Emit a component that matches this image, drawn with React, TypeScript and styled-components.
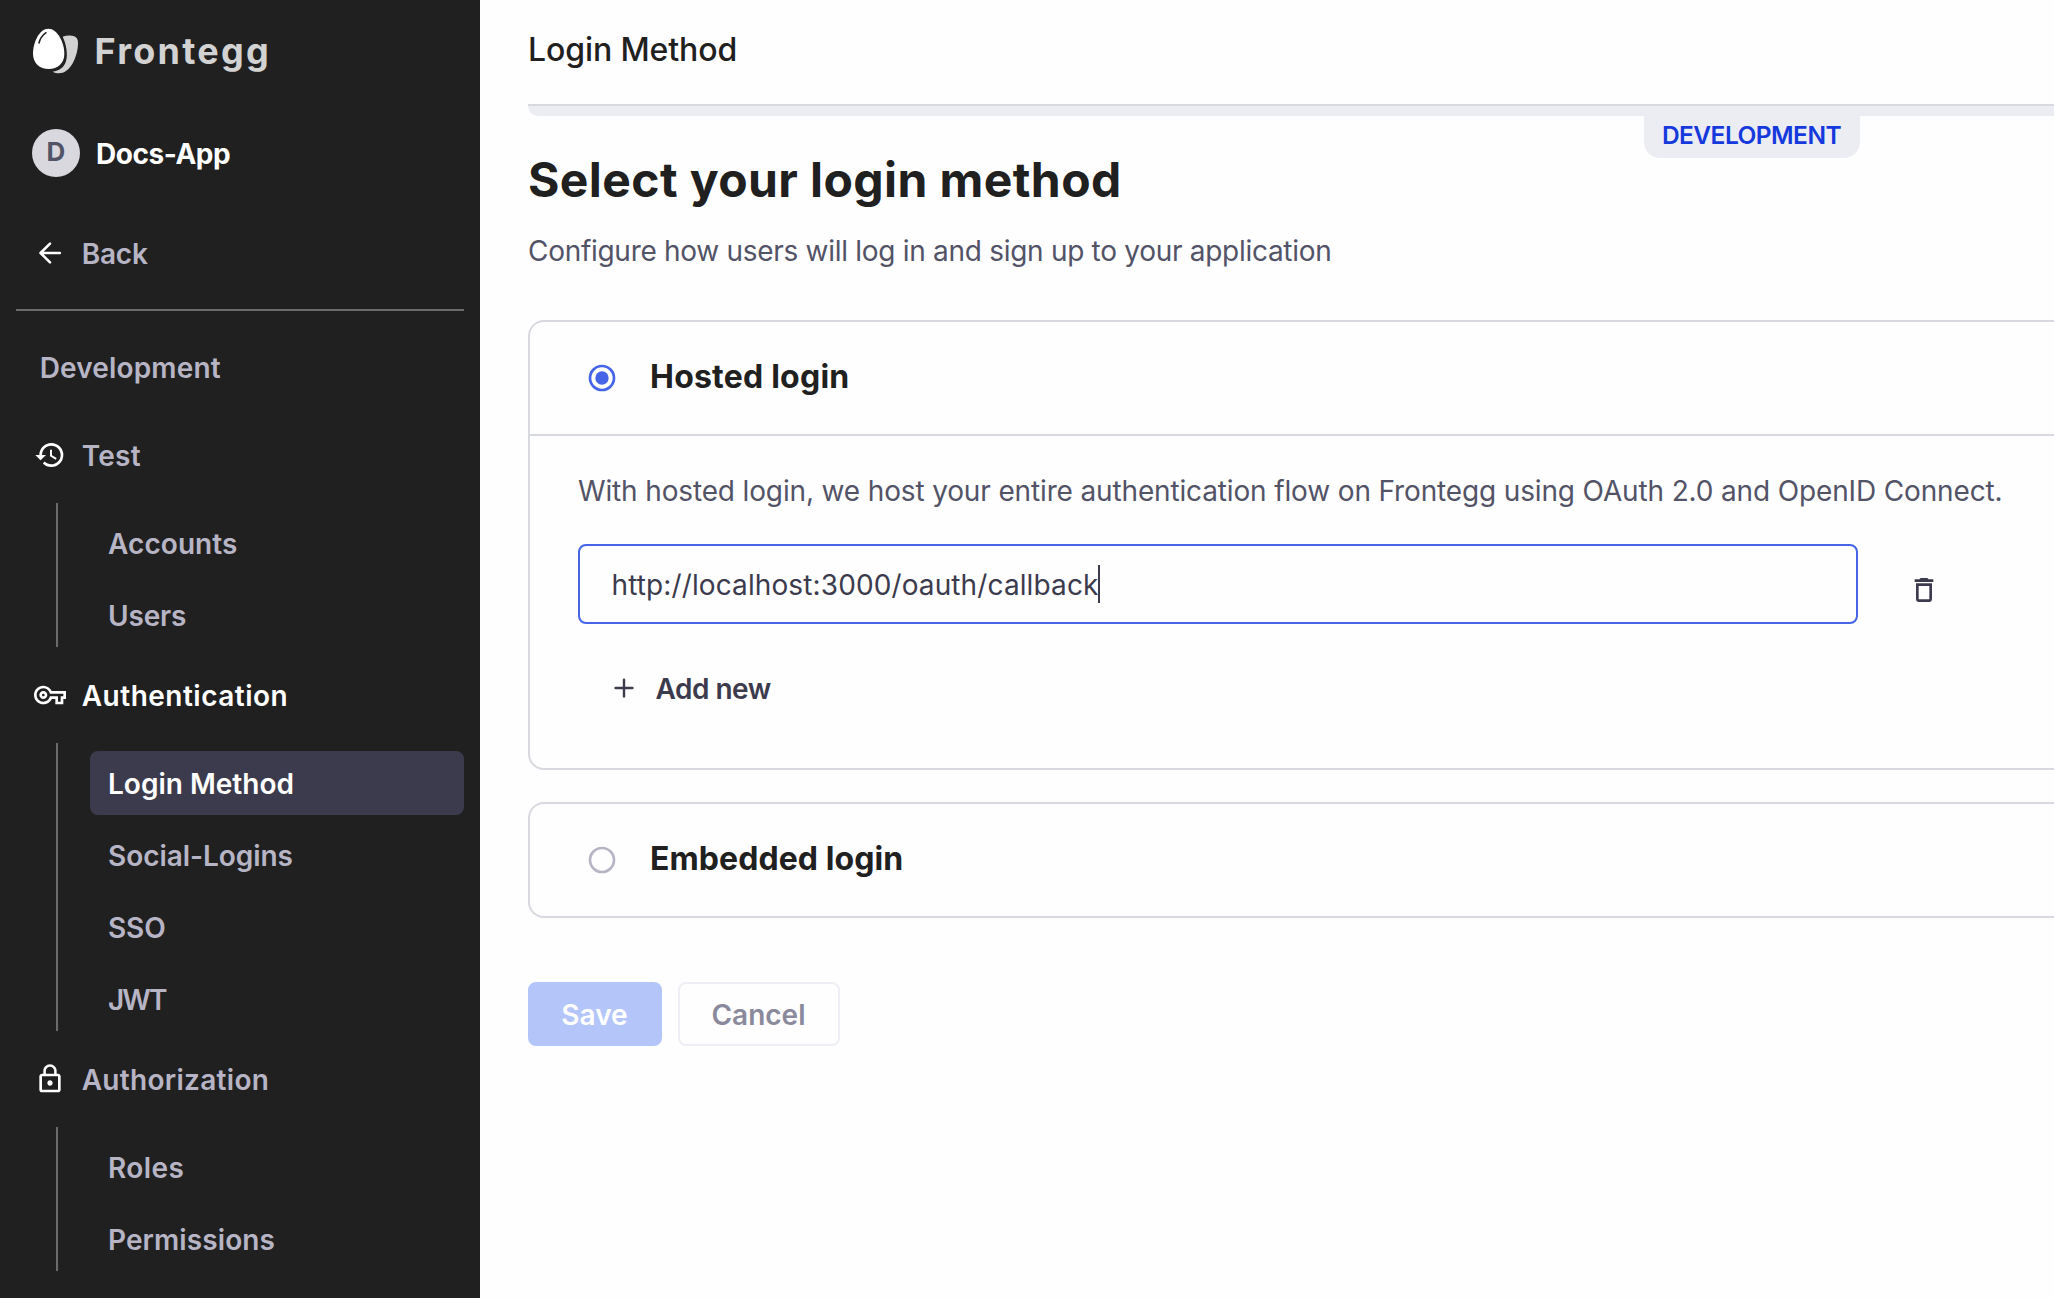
import React from 'react';
import styled, { createGlobalStyle } from 'styled-components';
import { MdDeleteOutline, MdHistory, MdLockOutline, MdOutlineVpnKey } from 'react-icons/md';

const GlobalStyle = createGlobalStyle`
  *, *::before, *::after { box-sizing: border-box; }
  body {
    margin: 0;
    overflow: hidden;
    background: #fefefe;
    font-family: Inter, "Liberation Sans", sans-serif;
    font-size: 28px;
    -webkit-font-smoothing: antialiased;
  }
  h1, h2, p { margin: 0; }
  button { font: inherit; }
`;

const Page = styled.div`
  display: flex;
  width: 100%;
  height: 100vh;
  overflow: hidden;
`;

/* Sidebar */

const Sidebar = styled.aside`
  flex: 0 0 480px;
  height: 100%;
  background: #202020;
  color: #b7b5c5;
  font-weight: 600;
`;

const Brand = styled.div`
  display: flex;
  align-items: center;
  height: 102px;
  padding-left: 24px;
  gap: 6.5px;

  svg { margin-top: -2px; }
`;

const BrandName = styled.span`
  color: #d2d2d2;
  font-size: 36px;
  font-weight: 700;
  letter-spacing: 2.25px;
`;

const Account = styled.div`
  display: flex;
  align-items: center;
  height: 102px;
  padding-left: 32px;
  gap: 16px;
  color: #fff;
  font-weight: 700;
  letter-spacing: -0.465px;
`;

const AccountName = styled.span`
  padding-top: 2px;
`;

const Avatar = styled.span`
  display: flex;
  align-items: center;
  justify-content: center;
  width: 48px;
  height: 48px;
  padding-bottom: 3px;
  border-radius: 50%;
  background: #d9d8df;
  color: #525367;
  font-size: 26px;
  letter-spacing: 0;
`;

const NavHead = styled.div<{ $height?: number; $active?: boolean }>`
  display: flex;
  align-items: center;
  height: ${(p) => p.$height ?? 96}px;
  padding-left: 34px;
  gap: 15.7px;
  color: ${(p) => (p.$active ? '#fff' : '#b7b5c5')};

  svg { flex: none; color: #fff; }
`;

const NavLabel = styled.span<{ $spacing?: number }>`
  padding-top: 2px;
  letter-spacing: ${(p) => p.$spacing ?? 0}px;
`;

const Divider = styled.hr`
  height: 2px;
  margin: 7px 16px 0;
  border: 0;
  background: #6b6b6b;
`;

const SectionLabel = styled.div`
  display: flex;
  align-items: center;
  height: 96px;
  padding: 18px 0 0 39.7px;
  letter-spacing: 0.15px;
`;

const NavGroup = styled.nav`
  display: flex;
  flex-direction: column;
  gap: 8px;
  margin: 0 16px 0 56px;
  padding: 8px 0 0 32px;
  border-left: 2px solid #6b6b6b;
`;

const NavItem = styled.a<{ $active?: boolean; $spacing?: number }>`
  display: flex;
  align-items: center;
  height: 64px;
  padding: 2px 0 0 18px;
  border-radius: 8px;
  background: ${(p) => (p.$active ? '#3c3b4d' : 'transparent')};
  color: ${(p) => (p.$active ? '#fff' : '#b7b5c5')};
  letter-spacing: ${(p) => p.$spacing ?? 0}px;
`;

/* Main area */

const Main = styled.main`
  flex: 1;
  min-width: 0;
  padding-left: 48px;
  color: #202020;
`;

const TopBar = styled.header`
  display: flex;
  align-items: center;
  height: 106px;
  padding-bottom: 5px;
  border-bottom: 2px solid #d8d8df;
  font-size: 32px;
  font-weight: 500;
  letter-spacing: -0.1px;
`;

const EnvironmentBand = styled.div`
  position: relative;
  height: 10px;
  border-bottom-left-radius: 10px;
  background: #ecedf2;
`;

const EnvironmentBadge = styled.span`
  position: absolute;
  top: 10px;
  left: 1116px;
  display: flex;
  align-items: center;
  justify-content: center;
  width: 216px;
  height: 42px;
  padding: 0 1px 4px 0;
  border-radius: 0 0 16px 16px;
  background: #ecedf2;
  color: #1539dc;
  font-size: 24.5px;
  font-weight: 600;
  letter-spacing: -0.55px;
`;

const Title = styled.h1`
  margin-top: 34px;
  font-size: 48px;
  font-weight: 700;
  line-height: 60px;
  letter-spacing: 0.412px;
`;

const Subtitle = styled.p`
  margin-top: 21px;
  color: #525367;
  line-height: 40px;
  letter-spacing: -0.29px;
`;

const Options = styled.div`
  display: flex;
  flex-direction: column;
  gap: 32px;
  margin-top: 49px;
`;

const Card = styled.section`
  border: 2px solid #d8d8df;
  border-right: 0;
  border-radius: 16px 0 0 16px;
`;

const CardHead = styled.div`
  display: flex;
  align-items: center;
  height: 112px;
  padding-left: 56px;
  gap: 32px;
`;

const CardTitle = styled.h2<{ $spacing: number }>`
  padding-bottom: 3px;
  font-size: 32px;
  font-weight: 700;
  letter-spacing: ${(p) => p.$spacing}px;
`;

const CardBody = styled.div`
  height: 334px;
  padding: 35px 0 0 48px;
  border-top: 2px solid #d8d8df;
`;

const CardText = styled.p`
  color: #525367;
  line-height: 40px;
  letter-spacing: -0.145px;
  white-space: nowrap;
`;

const UriRow = styled.div`
  display: flex;
  gap: 50px;
  margin-top: 33px;
`;

const UriField = styled.div`
  display: flex;
  align-items: center;
  width: 1280px;
  height: 80px;
  padding-left: 31.5px;
  border: 2px solid #4564e8;
  border-radius: 8px;
  color: #3c3b4d;
  letter-spacing: 0.114px;
`;

const UriValue = styled.span`
  padding-top: 2px;
`;

const Caret = styled.span`
  width: 2px;
  height: 38px;
  background: #3c3b4d;
`;

const IconButton = styled.button`
  display: flex;
  width: 32px;
  height: 32px;
  margin-top: 30px;
  padding: 0;
  border: 0;
  background: none;
  color: #3c3b4d;
`;

const AddButton = styled.button`
  display: flex;
  align-items: center;
  height: 40px;
  margin: 44px 0 0 30px;
  padding: 0;
  gap: 15.5px;
  border: 0;
  background: none;
  color: #3c3b4d;
  font-weight: 600;

  svg { flex: none; }
`;

const Actions = styled.div`
  display: flex;
  gap: 16px;
  margin-top: 64px;
`;

const ActionButton = styled.button<{ $primary?: boolean }>`
  width: ${(p) => (p.$primary ? 134 : 162)}px;
  height: 64px;
  padding: 2px 1px 0 0;
  border: 2px solid ${(p) => (p.$primary ? '#b4c5fa' : '#eeeef4')};
  border-radius: 8px;
  background: ${(p) => (p.$primary ? '#b4c5fa' : '#fefefe')};
  color: ${(p) => (p.$primary ? '#fff' : '#8a8a9c')};
  font-weight: 600;
`;

/* Icons */

const EggLogo = () => (
  <svg width="64" height="60" viewBox="0 0 192 180">
    <path
      d="M116 50C124 47 134 46 143 47C157 48 163 56 162 72C161 103 147 139 126 153C115 161 99 162 86 155C105 153 120 143 126 124C132 103 127 72 116 50Z"
      fill="#d2d2d2"
    />
    <path
      d="M73 26C100 26 121 67 121 101C121 130 101 147 74 147C47 147 27 129 27 101C27 67 46 26 73 26Z"
      fill="#fff"
    />
    <path d="M45 69C48 57 56 45 66 38" fill="none" stroke="#202020" strokeWidth="4.5" strokeLinecap="round" />
  </svg>
);

const BackArrow = () => (
  <svg width="32" height="32" viewBox="0 0 24 24" fill="none" stroke="currentColor" strokeWidth="1.9" strokeLinecap="round" strokeLinejoin="round">
    <path d="M19.4 12H5.2M12 4.9 4.9 12l7.1 7.1" />
  </svg>
);

const Plus = () => (
  <svg width="32" height="32" viewBox="0 0 32 32" fill="none" stroke="currentColor" strokeWidth="2.4" strokeLinecap="round">
    <path d="M16 7.6v16.8M7.6 16h16.8" />
  </svg>
);

const Radio = ({ checked }: { checked?: boolean }) => (
  <svg width="32" height="32" viewBox="0 0 24 24">
    <circle cx="12" cy="12" r="9" fill="none" stroke={checked ? '#4564e8' : '#b7b5c5'} strokeWidth="2" />
    {checked && <circle cx="12" cy="12" r="5" fill="#4564e8" />}
  </svg>
);

export default function App() {
  return (
    <Page>
      <GlobalStyle />
      <Sidebar>
        <Brand>
          <EggLogo />
          <BrandName>Frontegg</BrandName>
        </Brand>
        <Account>
          <Avatar>D</Avatar>
          <AccountName>Docs-App</AccountName>
        </Account>
        <NavHead $height={98}>
          <BackArrow />
          <NavLabel $spacing={-0.18}>Back</NavLabel>
        </NavHead>
        <Divider />
        <SectionLabel>Development</SectionLabel>

        <NavHead>
          <MdHistory size={32} />
          <NavLabel $spacing={0.25}>Test</NavLabel>
        </NavHead>
        <NavGroup>
          <NavItem $spacing={0.07}>Accounts</NavItem>
          <NavItem $spacing={-0.16}>Users</NavItem>
        </NavGroup>

        <NavHead $active>
          <MdOutlineVpnKey size={32} />
          <NavLabel $spacing={0.5}>Authentication</NavLabel>
        </NavHead>
        <NavGroup>
          <NavItem $active>Login Method</NavItem>
          <NavItem $spacing={-0.05}>Social-Logins</NavItem>
          <NavItem $spacing={-0.1}>SSO</NavItem>
          <NavItem $spacing={-1.9}>JWT</NavItem>
        </NavGroup>

        <NavHead>
          <MdLockOutline size={32} />
          <NavLabel $spacing={0.29}>Authorization</NavLabel>
        </NavHead>
        <NavGroup>
          <NavItem $spacing={0.41}>Roles</NavItem>
          <NavItem $spacing={0.09}>Permissions</NavItem>
        </NavGroup>
      </Sidebar>

      <Main>
        <TopBar>Login Method</TopBar>
        <EnvironmentBand>
          <EnvironmentBadge>DEVELOPMENT</EnvironmentBadge>
        </EnvironmentBand>
        <Title>Select your login method</Title>
        <Subtitle>Configure how users will log in and sign up to your application</Subtitle>

        <Options>
          <Card>
            <CardHead>
              <Radio checked />
              <CardTitle $spacing={0.22}>Hosted login</CardTitle>
            </CardHead>
            <CardBody>
              <CardText>
                With hosted login, we host your entire authentication flow on Frontegg using OAuth 2.0 and OpenID Connect.
              </CardText>
              <UriRow>
                <UriField>
                  <UriValue>http://localhost:3000/oauth/callback</UriValue>
                  <Caret />
                </UriField>
                <IconButton aria-label="Delete">
                  <MdDeleteOutline size={32} />
                </IconButton>
              </UriRow>
              <AddButton>
                <Plus />
                <NavLabel $spacing={-0.5}>Add new</NavLabel>
              </AddButton>
            </CardBody>
          </Card>
          <Card>
            <CardHead>
              <Radio />
              <CardTitle $spacing={0.08}>Embedded login</CardTitle>
            </CardHead>
          </Card>
        </Options>

        <Actions>
          <ActionButton $primary>Save</ActionButton>
          <ActionButton>Cancel</ActionButton>
        </Actions>
      </Main>
    </Page>
  );
}
